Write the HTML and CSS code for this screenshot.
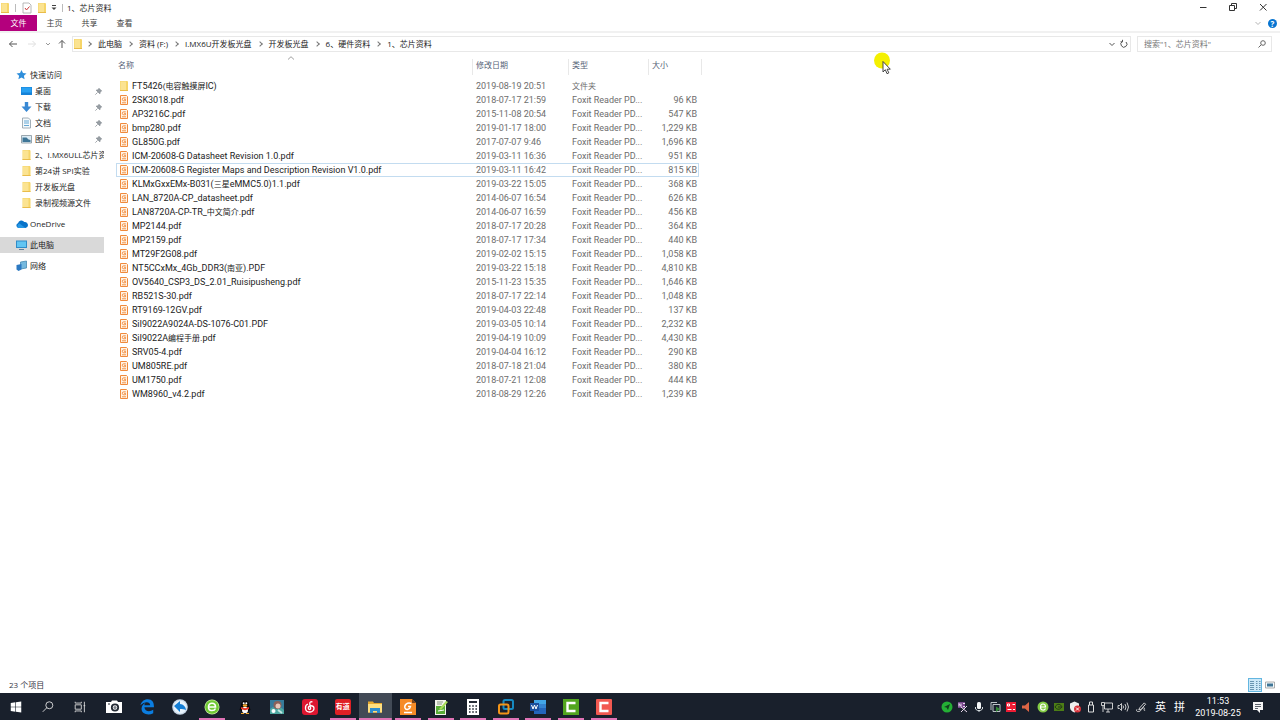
FILE: index.html
```html
<!DOCTYPE html>
<html lang="zh-CN">
<head>
<meta charset="utf-8">
<title>1、芯片资料</title>
<link rel="stylesheet" href="styles.css">
</head>
<body>
<svg class="sprite" aria-hidden="true">
  <symbol id="folder" viewBox="0 0 10 12"><path d="M1 1h7.500l.5 1v9H1z" fill="#f6d568"/><path d="M1.500 1.500h5.500v9h-5.500z" fill="#fbe391"/><path d="M1 10.500h8" stroke="#e9bc4a"/></symbol>
  <symbol id="pdf" viewBox="0 0 10 12"><path d="M1.500 1.500h6l1 1v8h-7z" fill="#fff3e5" stroke="#f08a3c"/><path d="M6.800 3.800H4.800a1.500 1.500 0 0 0 0 3h1.700V5.300H5M3 8.800h4" fill="none" stroke="#f08a3c" stroke-width=".9"/></symbol>
  <symbol id="pin" viewBox="0 0 10 10"><path d="M5.500 1.500 8.500 4.500 7 5 6.500 7.500 2.500 3.500 5 3zM4 6 1.500 8.500" fill="#99a0a6" stroke="#7d858c" stroke-width=".8"/></symbol>
</svg>

<header class="titlebar">
  <svg class="ico-folder"><use href="#folder"/></svg>
  <i class="divider"></i>
  <svg class="ico-check" viewBox="0 0 10 12"><path d="M1 1h6l2 2v8H1z" fill="#fff" stroke="#a6a6a6" stroke-width=".8"/><path d="M3 6l1.500 2L7.500 4.500" fill="none" stroke="#cc3b3b"/></svg>
  <svg class="ico-folder"><use href="#folder"/></svg>
  <svg class="ico-drop" viewBox="0 0 8 8"><path d="M2 1.500h4" stroke="#444"/><path d="M1.500 3.500h5L4 6z" fill="#444"/></svg>
  <i class="divider narrow"></i>
  <h1>1、芯片资料</h1>
  <div class="winbuttons">
    <button aria-label="最小化"><svg viewBox="0 0 10 10"><path d="M2 5.500h6.500" stroke="#333"/></svg></button>
    <button aria-label="还原"><svg viewBox="0 0 10 10"><path d="M1.500 3.500h5v5h-5zM3.500 3.500v-2h5v5h-2" fill="none" stroke="#333"/></svg></button>
    <button aria-label="关闭"><svg viewBox="0 0 10 10"><path d="M2 2l6.500 6.500M8.500 2 2 8.500" stroke="#333" fill="none"/></svg></button>
  </div>
</header>

<nav class="tabs">
  <button class="tab file">文件</button><button class="tab">主页</button><button class="tab">共享</button><button class="tab">查看</button>
  <div class="tabs-end">
    <svg class="ico-small" viewBox="0 0 8 8"><path d="M1.500 3 4 5.500 6.500 3" fill="none" stroke="#b5b5b5"/></svg>
    <button class="help" aria-label="帮助">?</button>
  </div>
</nav>

<div class="address">
  <div class="history">
    <button aria-label="后退"><svg viewBox="0 0 10 10"><path d="M9 5H1.500M4.500 2l-3 3 3 3" fill="none" stroke="#555"/></svg></button>
    <button aria-label="前进"><svg viewBox="0 0 10 10"><path d="M1 5h7.500M5.500 2l3 3-3 3" fill="none" stroke="#e0e0e0"/></svg></button>
    <button class="recent" aria-label="最近"><svg viewBox="0 0 10 10"><path d="M3 4l2 2 2-2" fill="none" stroke="#999"/></svg></button>
    <button class="up" aria-label="上移"><svg viewBox="0 0 10 10"><path d="M5 9V1.500M2 4.500l3-3 3 3" fill="none" stroke="#555"/></svg></button>
  </div>
  <div class="pathbox">
    <svg class="ico-folder"><use href="#folder"/></svg>
    <ol class="crumbs">
      <li><a href="#">此电脑</a></li><li><a href="#">资料 (F:)</a></li><li><a href="#">I.MX6U开发板光盘</a></li><li><a href="#">开发板光盘</a></li><li><a href="#">6、硬件资料</a></li><li><a href="#">1、芯片资料</a></li>
    </ol>
    <button aria-label="展开"><svg viewBox="0 0 10 10"><path d="M2.500 4 5 6.500 7.500 4" fill="none" stroke="#555"/></svg></button>
    <button aria-label="刷新"><svg viewBox="0 0 10 10"><path d="M3.500 2.500A3 3 0 1 0 7 3M3.500.800v2h-2" fill="none" stroke="#555"/></svg></button>
  </div>
  <label class="search"><input type="text" placeholder="搜索&quot;1、芯片资料&quot;" aria-label="搜索"><svg class="ico-ten" viewBox="0 0 10 10"><circle cx="6" cy="4" r="2.300" fill="none" stroke="#666"/><path d="M4.200 5.800 1.500 8.500" stroke="#666"/></svg></label>
</div>

<main class="content">
  <aside class="sidebar">
    <ul>
      <li><a href="#"><svg viewBox="0 0 12 12"><path d="M6 1l1.500 3 3.500.4-2.600 2.300.700 3.600L6 8.500l-3.100 1.800.7-3.600L1 4.400 4.500 4z" fill="#2f8fdb"/></svg>快速访问</a></li>
      <li class="sub"><a href="#"><svg viewBox="0 0 12 12"><path d="M.5 2h11v8H.5z" fill="#1582d7"/><path d="M1 2.500h10v5H1z" fill="#29a1f2"/></svg><span>桌面</span><svg class="pin"><use href="#pin"/></svg></a></li>
      <li class="sub"><a href="#"><svg viewBox="0 0 12 12"><path d="M4.300 1h3.400v4.500H11l-5 5.500-5-5.500h3.300z" fill="#3989d4"/></svg><span>下载</span><svg class="pin"><use href="#pin"/></svg></a></li>
      <li class="sub"><a href="#"><svg viewBox="0 0 12 12"><path d="M2 1h6l2 2v8H2z" fill="#f5fafc" stroke="#8b9ba6" stroke-width=".8"/><path d="M3.500 4h5M3.500 6h5M3.500 8.500h5" stroke="#65a7d4"/></svg><span>文档</span><svg class="pin"><use href="#pin"/></svg></a></li>
      <li class="sub"><a href="#"><svg viewBox="0 0 12 12"><path d="M1 2.500h10v7.500H1z" fill="#dcecf5" stroke="#84929b" stroke-width=".8"/><path d="M2 4.500h4l2 2 2 .5v2H2z" fill="#3e7697"/></svg><span>图片</span><svg class="pin"><use href="#pin"/></svg></a></li>
      <li class="sub"><a href="#"><svg><use href="#folder"/></svg><span>2、I.MX6ULL芯片资料</span></a></li>
      <li class="sub"><a href="#"><svg><use href="#folder"/></svg><span>第24讲 SPI实验</span></a></li>
      <li class="sub"><a href="#"><svg><use href="#folder"/></svg><span>开发板光盘</span></a></li>
      <li class="sub"><a href="#"><svg><use href="#folder"/></svg><span>录制视频源文件</span></a></li>
    </ul>
    <ul><li><a href="#"><svg viewBox="0 0 12 12"><path d="M3 10a2.500 2.500 0 0 1-.5-4.800A3.500 3.500 0 0 1 8.800 4 3 3 0 0 1 10 10z" fill="#0873c9"/><path d="M3 10a2.500 2.500 0 0 1 1-4.500L10 10z" fill="#2597e5"/></svg>OneDrive</a></li></ul>
    <ul><li class="current"><a href="#"><svg viewBox="0 0 12 12"><path d="M.5 1.500h11v7.500H.5z" fill="#308cc8"/><path d="M1.500 2.500h9v5.500h-9z" fill="#62c5f2"/><path d="M3.500 10.500h5" stroke="#62819b"/></svg>此电脑</a></li></ul>
    <ul><li><a href="#"><svg viewBox="0 0 12 12"><path d="M5 2l6-1v7L5 9z" fill="#75b9df" stroke="#3a7fab" stroke-width=".7"/><path d="M1 5l5-1v5.500L3 11 1 9.500z" fill="#2c79c2"/></svg>网络</a></li></ul>
  </aside>

  <section class="files">
    <table>
      <colgroup><col class="c-name"><col class="c-date"><col class="c-type"><col class="c-size"></colgroup>
      <thead><tr><th><svg class="sort" viewBox="0 0 8 4"><path d="M1 3.500 4 .7 7 3.500" fill="none" stroke="#888" stroke-width=".8"/></svg>名称</th><th>修改日期</th><th>类型</th><th>大小</th></tr></thead>
      <tbody>
      <tr><td><svg><use href="#folder"/></svg>FT5426<span class="han">(电容触摸屏</span>IC)</td><td>2019-08-19 20:51</td><td><span class="han">文件夹</span></td><td></td></tr>
      <tr><td><svg><use href="#pdf"/></svg>2SK3018.pdf</td><td>2018-07-17 21:59</td><td>Foxit Reader PD...</td><td>96 KB</td></tr>
      <tr><td><svg><use href="#pdf"/></svg>AP3216C.pdf</td><td>2015-11-08 20:54</td><td>Foxit Reader PD...</td><td>547 KB</td></tr>
      <tr><td><svg><use href="#pdf"/></svg>bmp280.pdf</td><td>2019-01-17 18:00</td><td>Foxit Reader PD...</td><td>1,229 KB</td></tr>
      <tr><td><svg><use href="#pdf"/></svg>GL850G.pdf</td><td>2017-07-07 9:46</td><td>Foxit Reader PD...</td><td>1,696 KB</td></tr>
      <tr><td><svg><use href="#pdf"/></svg>ICM-20608-G Datasheet Revision 1.0.pdf</td><td>2019-03-11 16:36</td><td>Foxit Reader PD...</td><td>951 KB</td></tr>
      <tr class="focused"><td><svg><use href="#pdf"/></svg>ICM-20608-G Register Maps and Description Revision V1.0.pdf</td><td>2019-03-11 16:42</td><td>Foxit Reader PD...</td><td>815 KB</td></tr>
      <tr><td><svg><use href="#pdf"/></svg>KLMxGxxEMx-B031(<span class="han">三星</span>eMMC5.0)1.1.pdf</td><td>2019-03-22 15:05</td><td>Foxit Reader PD...</td><td>368 KB</td></tr>
      <tr><td><svg><use href="#pdf"/></svg>LAN_8720A-CP_datasheet.pdf</td><td>2014-06-07 16:54</td><td>Foxit Reader PD...</td><td>626 KB</td></tr>
      <tr><td><svg><use href="#pdf"/></svg>LAN8720A-CP-TR_<span class="han">中文简介</span>.pdf</td><td>2014-06-07 16:59</td><td>Foxit Reader PD...</td><td>456 KB</td></tr>
      <tr><td><svg><use href="#pdf"/></svg>MP2144.pdf</td><td>2018-07-17 20:28</td><td>Foxit Reader PD...</td><td>364 KB</td></tr>
      <tr><td><svg><use href="#pdf"/></svg>MP2159.pdf</td><td>2018-07-17 17:34</td><td>Foxit Reader PD...</td><td>440 KB</td></tr>
      <tr><td><svg><use href="#pdf"/></svg>MT29F2G08.pdf</td><td>2019-02-02 15:15</td><td>Foxit Reader PD...</td><td>1,058 KB</td></tr>
      <tr><td><svg><use href="#pdf"/></svg>NT5CCxMx_4Gb_DDR3(<span class="han">南亚</span>).PDF</td><td>2019-03-22 15:18</td><td>Foxit Reader PD...</td><td>4,810 KB</td></tr>
      <tr><td><svg><use href="#pdf"/></svg>OV5640_CSP3_DS_2.01_Ruisipusheng.pdf</td><td>2015-11-23 15:35</td><td>Foxit Reader PD...</td><td>1,646 KB</td></tr>
      <tr><td><svg><use href="#pdf"/></svg>RB521S-30.pdf</td><td>2018-07-17 22:14</td><td>Foxit Reader PD...</td><td>1,048 KB</td></tr>
      <tr><td><svg><use href="#pdf"/></svg>RT9169-12GV.pdf</td><td>2019-04-03 22:48</td><td>Foxit Reader PD...</td><td>137 KB</td></tr>
      <tr><td><svg><use href="#pdf"/></svg>SiI9022A9024A-DS-1076-C01.PDF</td><td>2019-03-05 10:14</td><td>Foxit Reader PD...</td><td>2,232 KB</td></tr>
      <tr><td><svg><use href="#pdf"/></svg>SiI9022A<span class="han">编程手册</span>.pdf</td><td>2019-04-19 10:09</td><td>Foxit Reader PD...</td><td>4,430 KB</td></tr>
      <tr><td><svg><use href="#pdf"/></svg>SRV05-4.pdf</td><td>2019-04-04 16:12</td><td>Foxit Reader PD...</td><td>290 KB</td></tr>
      <tr><td><svg><use href="#pdf"/></svg>UM805RE.pdf</td><td>2018-07-18 21:04</td><td>Foxit Reader PD...</td><td>380 KB</td></tr>
      <tr><td><svg><use href="#pdf"/></svg>UM1750.pdf</td><td>2018-07-21 12:08</td><td>Foxit Reader PD...</td><td>444 KB</td></tr>
      <tr><td><svg><use href="#pdf"/></svg>WM8960_v4.2.pdf</td><td>2018-08-29 12:26</td><td>Foxit Reader PD...</td><td>1,239 KB</td></tr>
      </tbody>
    </table>
  </section>
</main>

<div class="status">
  <span>23 个项目</span>
  <div class="views">
    <button class="on" aria-label="详细信息"><svg viewBox="0 0 14 14"><path d="M2 3.500h4M2 5.500h4M2 7.500h4M2 9.500h4M2 11.500h4M8 3.500h1.500M8 5.500h1.500M8 7.500h1.500M8 9.500h1.500M8 11.500h1.500M11 3.500h1.500M11 5.500h1.500M11 7.500h1.500M11 9.500h1.500M11 11.500h1.500" stroke="#5e8ba8" stroke-width=".9"/></svg></button>
    <button aria-label="大图标"><svg viewBox="0 0 14 14"><path d="M2.500 4h9v6h-9z" fill="#f5fafc" stroke="#999" stroke-width=".8"/><path d="M4 5.500h6v3H4z" fill="#3f7596"/></svg></button>
  </div>
</div>

<footer class="taskbar">
  <div class="system">
    <button aria-label="开始"><svg viewBox="0 0 16 16"><path d="M2 3.400l5.300-.8v5H2zM8 2.500l6-.9v6H8zM2 8.300h5.300v5L2 12.500zM8 8.300h6v6l-6-.9z" fill="#fff"/></svg></button>
    <button aria-label="搜索"><svg viewBox="0 0 16 16"><circle cx="9.500" cy="6" r="4" fill="none" stroke="#e5e5e5"/><path d="M6.700 8.800 2 13.500" stroke="#e5e5e5"/></svg></button>
    <button aria-label="任务视图"><svg viewBox="0 0 16 16"><path d="M2.500 5.500h7v5h-7zM2.500 2v1.500h7V2M2.500 14v-1.500h7V14M13 2v12M12 6.500h2" fill="none" stroke="#ddd"/></svg></button>
  </div>
  <div class="apps">
    <button aria-label="相机"><svg viewBox="0 0 16 16"><path d="M0 3h5l1-1.500h5L12 3h4v11H0z" fill="#fff"/><circle cx="9" cy="8.500" r="3.200" fill="#fff" stroke="#242b35" stroke-width="1.800"/><circle cx="9" cy="8.500" r="1.600" fill="#7d838b"/><path d="M2 5h2" stroke="#242b35"/></svg></button>
    <button aria-label="Edge"><svg viewBox="1.500 2 12.500 14"><path fill-rule="evenodd" d="M2 7.500C3 3.500 6 2.200 8.500 2.200c4 0 5.500 3 5.300 7H5.500c.3 3.700 4.500 4.300 7.700 2.300v3C8.500 17 2.500 15 3 10c.2-2.200 1.500-3.800 3.500-4.600-.8.700-1 1.400-1.100 2.100h5.100C10.500 4 5.500 4 2 7.500z" fill="#0b7de0"/></svg></button>
    <button aria-label="浏览器"><svg viewBox="0 0 16 16"><circle cx="8" cy="8" r="7.800" fill="#c8d8e8"/><circle cx="8" cy="8" r="6.500" fill="#e8f3fc"/><path d="M2 7l6-5v3c3 0 6 3 6 6-2-1-3.500-1-6-1v3z" fill="#147ed5"/></svg></button>
    <button class="running" aria-label="360浏览器"><svg viewBox="0 0 16 16"><circle cx="8" cy="8" r="7.500" fill="#c9eba2"/><circle cx="8" cy="8" r="6.800" fill="#70c934"/><path d="M4.500 8h7c0-5-7-5-7 0 0 5 6 4 7 1.500" fill="none" stroke="#fff" stroke-width="1.600"/></svg></button>
    <button aria-label="QQ"><svg viewBox="0 0 16 16"><path d="M4 6c0-6 8-6 8 0l1.500 5-1.500.5c-.5 2-2 3-4 3s-3.500-1-4-3L2.500 11z" fill="#070707"/><ellipse cx="8" cy="11" rx="3" ry="3.200" fill="#fff"/><path d="M4 8c3 1.500 5 1.500 8 0v2c-3 1.500-5 1.500-8 0z" fill="#e83424"/><ellipse cx="8" cy="6.500" rx="2.300" ry="1.200" fill="#f5a82c"/><circle cx="6.700" cy="4.200" r="1" fill="#fff"/><circle cx="9.300" cy="4.200" r="1" fill="#fff"/><path d="M4 14.500h3M9 14.500h3" stroke="#f5a82c"/></svg></button>
    <button aria-label="照片"><svg viewBox="0 0 16 16"><path d="M1 1h14v14H1z" fill="#367b9b"/><path d="M1 10l3-2 3 2 3-3 5 4v4H1z" fill="#4da7a1"/><circle cx="8.500" cy="6" r="4" fill="#8b6259"/><circle cx="9" cy="7" r="2.500" fill="#e7c8bb"/><circle cx="4.500" cy="12" r="2" fill="#fff"/><path d="M9 11l4 3" stroke="#c2e4e0" stroke-width="2"/></svg></button>
    <button aria-label="网易云音乐"><svg viewBox="0 0 16 16"><rect width="16" height="16" rx="3" fill="#dd1630"/><path d="M10.500 3C8.500 2.200 7.500 3.500 7.800 5l.8 4c.3 2-2.300 2-2.300 0C6.300 6 11.500 6 12 9c.3 5-8 5.500-8.500.5C3.300 7 4.500 5.500 6 5" fill="none" stroke="#fff" stroke-width="1.300"/></svg></button>
    <button class="running" aria-label="有道"><span class="youdao">有道</span></button>
    <button class="running active" aria-label="文件资源管理器"><svg viewBox="0 0 16 16"><path d="M1 2.500h5l1 1.500h8v9.500H1z" fill="#e7a82d"/><path d="M1 5h14v8.500H1z" fill="#ffdf80"/><path d="M3 9h10v5h-3v-2H6v2H3z" fill="#2f8dcd"/></svg></button>
    <button class="running" aria-label="Foxit"><svg viewBox="0 0 16 16"><path d="M0 0h12l4 4v12H0z" fill="#f68b26"/><path d="M12 0v4h4z" fill="#7a431a"/><path d="M11.500 4.500C7 3 4 6 5 9c1 2.500 5 1.500 5.500-1.500H8M4 13.500h8" fill="none" stroke="#fff" stroke-width="1.500"/></svg></button>
    <button class="running" aria-label="编辑器"><svg viewBox="0 0 16 16"><path d="M2 1h11v15H2z" fill="#f2f4ec"/><path d="M3 7h9v8H3z" fill="#58ad36"/><path d="M4 3h6M4 5h5" stroke="#879580"/><path d="M6 10l7-8 2 1-7 8z" fill="#a8db58"/><path d="M5 12l6-1" stroke="#fff"/></svg></button>
    <button class="running" aria-label="计算器"><svg viewBox="0 0 16 16"><path d="M2 0h12v16H2z" fill="#fff"/><path d="M4 3h8" stroke="#242b35" stroke-width="2"/><path d="M4 7h8M4 10h8M4 13h8" stroke="#242b35" stroke-width="1.600" stroke-dasharray="1.600"/></svg></button>
    <button class="running" aria-label="VMware"><svg viewBox="0 0 16 16"><rect x="5.500" y="1" width="9.500" height="9" rx="1.500" fill="none" stroke="#168ac1" stroke-width="2"/><rect x="1" y="5.500" width="9.500" height="9" rx="1.500" fill="none" stroke="#f39418" stroke-width="2"/></svg></button>
    <button class="running" aria-label="Word"><svg viewBox="0 0 16 16"><path d="M4 1h12v14H4z" fill="#2465bb"/><path d="M4 1h12v4H4z" fill="#42a5e7"/><path d="M4 5h12v4H4z" fill="#3482d0"/><path d="M0 4h9v8H0z" fill="#1b4f9d"/><path d="M1.500 6l1.500 4 1.500-4L6 10l1.500-4" fill="none" stroke="#fff"/></svg></button>
    <button class="running" aria-label="Camtasia"><svg viewBox="0 0 16 16"><path d="M0 0h16v16H0z" fill="#52a51f"/><path d="M12.500 4h-8v8h8" fill="none" stroke="#fff" stroke-width="2.400"/></svg></button>
    <button class="running" aria-label="Recorder"><svg viewBox="0 0 16 16"><rect width="16" height="16" rx="1" fill="#f25951"/><path d="M12.500 4h-8v8h8" fill="none" stroke="#fff" stroke-width="2.400"/></svg></button>
  </div>
  <div class="tray">
    <svg viewBox="0 0 12 12"><circle cx="6" cy="6" r="5.500" fill="#24af35"/><path d="M3 6l6-3-2 6-1.500-2.500z" fill="#103f1c"/></svg>
    <svg viewBox="0 0 12 12"><path d="M1 1h7v6H1z" fill="#77468b"/><path d="M2 5.500v-3l2 3v-3M6 2.500h2M6 5.500h2M4 11l6-6M4 6l6 5" fill="none" stroke="#e9d9ed"/></svg>
    <svg viewBox="0 0 12 12"><rect x="4" y="1" width="4" height="7" rx="1.500" fill="#f3f5f6"/><path d="M2.500 6v2l2 1.500h3l2-1.500V6M6 9.500V11" fill="none" stroke="#d4dadd"/></svg>
    <svg viewBox="0 0 12 12"><path d="M2 9V1.500h6M4 3.500h7v7H4z" fill="none" stroke="#bcc2c6"/><path d="M7 5.500l4 2.500-4 3z" fill="#338a35"/></svg>
    <svg viewBox="0 0 12 12"><path d="M1 1h10v10H1z" fill="#ed1c34"/><path d="M2.500 3h2v2h-2zM7.500 3.500h2.500M2.500 8.500h4M8 8.500h2" fill="none" stroke="#fff"/></svg>
    <svg viewBox="0 0 12 12"><path d="M1 4.500h3L8 1v10L4 7.500H1z" fill="#de6545"/></svg>
    <svg viewBox="0 0 12 12"><circle cx="6" cy="6" r="5.500" fill="#84cc45"/><path d="M3.500 6h5c0-4-5-4-5 0s4 3.500 5 1.500" fill="none" stroke="#fff" stroke-width="1.200"/></svg>
    <svg viewBox="0 0 12 12"><path d="M1 2h10v8H1z" fill="#4c7d16"/><path d="M2 6c2-4 6-3 7 0-2 3-5 3-7 0zM5 6h3" fill="none" stroke="#203616"/></svg>
    <svg viewBox="0 0 12 12"><path d="M1 2.500 5.500.500 10 2.500v4c0 3-2 4-4.500 5C3 10.500 1 9 1 6.500z" fill="#eee"/><circle cx="8.500" cy="8" r="3.500" fill="#d8333b"/><path d="M7 6.500l3 3M10 6.500l-3 3" stroke="#fff"/></svg>
    <svg viewBox="0 0 12 12"><path d="M3.500 4h5v7h-5zM4.500 4V1h3v3" fill="none" stroke="#ddd"/></svg>
    <svg viewBox="0 0 12 12"><path d="M3.500 2h8v6h-8zM7 8v3M5 11h4M.500 1.500h3v3h-3zM2 5v6" fill="none" stroke="#ddd" stroke-width=".9"/></svg>
    <svg viewBox="0 0 12 12"><path d="M1 4.500h1.500l2-2v7l-2-2H1zM6 4.500q1 1.500 0 3M8 3q2 3 0 6M10 1.500q3 4.500 0 9" fill="none" stroke="#ddd" stroke-width=".9"/></svg>
  </div>
  <div class="ime">
    <svg viewBox="0 0 12 12"><path d="M4 7l5-5.500 1.500 1.500-5 5.500L3 9zM1 8.500c-2 3 3 3 4 1.500s3-4 4-3-2 3 1 2.500" fill="none" stroke="#ddd"/></svg>
    <span>英</span><span>拼</span>
  </div>
  <time class="clock"><span>11:53</span><span>2019-08-25</span></time>
  <button class="notice" aria-label="通知"><svg viewBox="0 0 12 12"><path d="M1 1h10v8H8v3L5 9H1z" fill="#f5f5f5"/><path d="M3 3.500h6M3 5.500h6M3 7.500h3" stroke="#343b47" stroke-width=".8"/></svg></button>
</footer>

<svg class="pointer" viewBox="0 0 18 24" aria-hidden="true"><circle cx="8" cy="8.500" r="8" fill="#f4f000"/><path d="M9 9.500v10.500l2.300-2.300 1.700 4 1.800-.8-1.700-3.700h3.200z" fill="#fff" stroke="#333" stroke-width=".9"/></svg>
</body>
</html>
```

FILE: styles.css
```css
* { box-sizing: border-box; }
body {
  margin: 0;
  height: 100vh;
  display: flex;
  flex-direction: column;
  overflow: hidden;
  background: #fff;
  color: #222;
  font: 8px/16px "Open Sans", "Noto Sans CJK SC", sans-serif;
}
button { border: 0; padding: 0; margin: 0; background: none; font: inherit; color: inherit; display: flex; align-items: center; justify-content: center; }
a { color: inherit; text-decoration: none; }
ul, ol { list-style: none; margin: 0; padding: 0; }
svg { display: block; flex: none; }
.sprite { position: absolute; width: 0; height: 0; }
.ico-folder, .ico-check { width: 10px; height: 12px; }
.ico-drop, .ico-small { width: 8px; height: 8px; }
.ico-ten { width: 10px; height: 10px; }

.titlebar { display: flex; align-items: center; height: 15px; flex: none; }
.titlebar .divider { width: 1px; height: 8px; margin: 0 6px 0 5px; background: #bbb; }
.titlebar .narrow { margin: 0 4px; }
.titlebar .ico-check { margin-right: 5px; }
.titlebar .ico-drop { margin-left: 3px; }
.titlebar h1 { margin: 0; font-size: 8px; font-weight: 400; }
.winbuttons { margin: 0 2px 2px auto; display: flex; }
.winbuttons button { width: 30px; height: 13px; }
.winbuttons svg { width: 10px; height: 10px; }

.tabs { display: flex; align-items: center; height: 16px; flex: none; color: #444; }
.tab { width: 35px; height: 16px; }
.tab.file { width: 37px; background: #b4007d; color: #fff; }
.tabs-end { margin-left: auto; display: flex; align-items: center; gap: 6px; padding-right: 3px; }
.help { width: 9px; height: 9px; border-radius: 50%; background: #0875d1; color: #fff; font-weight: 700; line-height: 9px; }

.address { display: flex; align-items: center; height: 22px; flex: none; padding: 3px 8px 1px 0; border-top: 2px solid #f1f1f1; }
.history { display: flex; align-items: center; width: 72px; padding-left: 8px; }
.history button { width: 10px; height: 16px; margin-right: 9px; }
.history .recent { width: 10px; margin: 0 4px 0 -3px; }
.history .up { margin: 0; }
.history svg, .pathbox button svg { width: 10px; height: 10px; }
.pathbox { flex: 1; display: flex; align-items: center; height: 16px; border: 1px solid #e8e8e8; }
.crumbs { display: flex; flex: 1; line-height: 14px; }
.crumbs li { display: flex; align-items: center; }
.crumbs li::before { content: ""; width: 3px; height: 3px; margin: 0 7px 0 4px; border: solid #777; border-width: 1px 1px 0 0; transform: rotate(45deg); }
.crumbs li + li::before { margin-left: 6px; }
.pathbox button { width: 12px; height: 14px; }
.search { display: flex; align-items: center; width: 135px; height: 16px; margin-left: 6px; padding: 0 4px 0 6px; border: 1px solid #e8e8e8; }
.search input { flex: 1; min-width: 0; border: 0; padding: 0; font: inherit; line-height: 14px; outline: 0; }
.search input::placeholder { color: #777; opacity: 1; }

.content { flex: 1; min-height: 0; display: flex; }
.sidebar { width: 104px; padding-top: 14px; display: flex; flex-direction: column; gap: 5px; flex: none; }
.sidebar a { display: flex; align-items: center; height: 16px; padding-left: 15px; gap: 2px; white-space: nowrap; }
.sidebar .sub a { padding-left: 20px; gap: 2px; }
.sidebar .sub span { flex: 1; min-width: 0; overflow: hidden; }
.sidebar svg { width: 13px; height: 12px; }
.sidebar .pin { width: 9px; height: 9px; margin-right: 1px; }
.sidebar .current { background: #d9d9d9; }

.files { flex: 1; padding: 6px 0 0 12px; overflow: hidden; }
.files table { table-layout: fixed; width: 586px; border-collapse: separate; border-spacing: 0; font: 9px/12px Roboto, "Noto Sans CJK SC", sans-serif; }
.c-name { width: 356px; }
.c-date { width: 96px; }
.c-type { width: 80px; }
.c-size { width: 54px; }
.files th { height: 20px; padding: 0 4px 7px; font-size: 8px; font-weight: 400; line-height: 13px; text-align: left; color: #566377; }
.files th + th { background: linear-gradient(#e8e8e8, #e8e8e8) left top / 1px 16px no-repeat; }
.files th:last-child { background: linear-gradient(#e8e8e8, #e8e8e8) left top / 1px 16px no-repeat, linear-gradient(#e8e8e8, #e8e8e8) right top / 1px 16px no-repeat; }
.files th:first-child { padding-left: 2px; position: relative; }
.sort { position: absolute; top: -3px; left: 48%; width: 8px; height: 4px; }
.files td { height: 14px; padding: 0 4px; border: solid transparent; border-width: 1px 0; color: #6d6d6d; white-space: nowrap; }
.files td:first-child { padding-left: 3px; color: #222; }
.files td:last-child { padding-right: 5px; text-align: right; }
.files td svg { float: left; width: 10px; height: 12px; margin-right: 3px; }
.files .focused td { border-color: #c3dcf0; }
.files .focused td:first-child { padding-left: 2px; border-left: 1px solid #c3dcf0; }
.files .focused td:last-child {
  border-color: transparent;
  background:
    linear-gradient(#c3dcf0, #c3dcf0) left top / 51px 1px no-repeat border-box,
    linear-gradient(#c3dcf0, #c3dcf0) left bottom / 51px 1px no-repeat border-box,
    linear-gradient(#c3dcf0, #c3dcf0) 50px 0 / 1px 14px no-repeat border-box;
}
.han { font-size: 8px; line-height: 10px; }

.status { display: flex; align-items: center; justify-content: space-between; height: 16px; flex: none; padding: 0 3px 0 9px; color: #334; }
.views { display: flex; gap: 1px; }
.views button { width: 14px; height: 14px; }
.views svg { width: 14px; height: 14px; }
.views .on { background: #cce8f8; border: 1px solid #63b6e0; }

.taskbar { display: flex; height: 27px; flex: none; background: #19202c; color: #fff; }
.system { display: flex; margin-right: 2px; }
.system button { width: 32px; }
.system svg, .apps svg { width: 16px; height: 16px; }
.system svg { width: 14px; }
.apps { display: grid; grid-template-columns: repeat(16, 1fr); width: 522px; }
.apps button { border: solid transparent; border-width: 2px 0; background-clip: border-box; }
.apps .running { background: linear-gradient(#df73b6, #df73b6) center bottom / 26px 2px no-repeat border-box; }
.apps .active { background: linear-gradient(#df73b6, #df73b6) center bottom / 33px 2px no-repeat border-box, #424a56 border-box; }
.youdao { width: 16px; height: 16px; border-radius: 2px; background: #df2025; font-size: 7px; font-weight: 700; text-align: center; }
.tray { margin-left: auto; display: flex; align-items: center; gap: 4px; margin-right: 1px; }
.tray svg { width: 12px; height: 12px; }
.ime { display: flex; align-items: center; gap: 8px; margin-left: 6px; font-size: 11px; }
.ime svg { width: 11px; height: 12px; }
.clock { display: flex; flex-direction: column; justify-content: center; width: 62px; padding-left: 4px; text-align: center; font: 9px/12px Roboto, sans-serif; }
.notice { width: 22px; margin-right: 11px; }
.notice svg { width: 12px; height: 12px; }
.pointer { position: absolute; left: 874px; top: 52px; width: 18px; height: 24px; }
```
